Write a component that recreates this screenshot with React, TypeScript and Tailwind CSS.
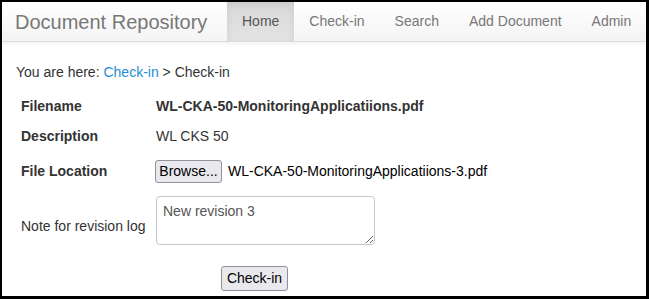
import React from "react";

export default function App() {
  const navItems = ["Check-in", "Search", "Add Document", "Admin"];
  return (
    <div
      className="w-[649px] h-[299px] bg-black pl-[2px] pt-[2px] pr-[3px] pb-[3px] box-border"
      style={{ fontFamily: '"Liberation Sans", Arial, sans-serif' }}
    >
      <div className="w-full h-full bg-white overflow-hidden flex flex-col">
        {/* Navbar */}
        <div className="h-[40px] shrink-0 flex items-stretch border-b border-[#dcdcdc] bg-gradient-to-b from-white to-[#f4f4f4] shadow-[0_1px_5px_rgba(0,0,0,0.075)] whitespace-nowrap">
          <div className="w-[225px] shrink-0 pl-[13px] flex items-center text-[20px] text-[#777] leading-none">
            Document Repository
          </div>
          <div className="flex items-stretch text-[14px] text-[#777]">
            <div className="shrink-0 px-[15px] flex items-center bg-gradient-to-b from-[#dadada] to-[#e3e3e3] shadow-[inset_0_3px_9px_rgba(0,0,0,0.075)] text-[#555]">
              Home
            </div>
            {navItems.map((n) => (
              <div key={n} className="shrink-0 px-[15px] flex items-center whitespace-nowrap">
                {n}
              </div>
            ))}
          </div>
        </div>

        {/* Content */}
        <div className="flex flex-col text-[14px] text-[#333]">
          <div className="mt-[20px] h-[20px] leading-[20px] pl-[14px]">
            You are here: <span className="text-[#1f8dd6]">Check-in</span> &gt; Check-in
          </div>

          <div className="mt-[14px] h-[20px] leading-[20px] flex">
            <div className="w-[154px] pl-[19px] font-bold">Filename</div>
            <div className="font-bold">WL-CKA-50-MonitoringApplicatiions.pdf</div>
          </div>

          <div className="mt-[10px] h-[20px] leading-[20px] flex">
            <div className="w-[154px] pl-[19px] font-bold">Description</div>
            <div>WL CKS 50</div>
          </div>

          <div className="mt-[14px] h-[23px] flex items-center">
            <div className="w-[153px] pl-[19px] font-bold">File Location</div>
            <div className="flex items-center">
              <button className="w-[67px] h-[23px] text-[14px] text-black bg-[#e9e9ed] border border-[#8f8f9d] rounded-[3px] flex items-center justify-center">
                Browse...
              </button>
              <span className="ml-[6px] text-black">WL-CKA-50-MonitoringApplicatiions-3.pdf</span>
            </div>
          </div>

          <div className="mt-[13px] h-[49px] flex">
            <div className="w-[154px] pl-[19px] pt-[20px] leading-[20px]">Note for revision log</div>
            <textarea
              readOnly
              defaultValue="New revision 3"
              className="w-[219px] h-[49px] border border-[#c8c8c8] rounded-[4px] px-[6px] pt-[4px] text-[14px] text-[#555] leading-[20px] outline-none resize"
              style={{ fontFamily: '"Liberation Sans", Arial, sans-serif' }}
            />
          </div>

          <div className="mt-[21px] pl-[219px]">
            <button className="w-[67px] h-[25px] text-[14px] text-black bg-[#e9e9ed] border border-[#8f8f9d] rounded-[3px] flex items-center justify-center">
              Check-in
            </button>
          </div>
        </div>
      </div>
    </div>
  );
}
